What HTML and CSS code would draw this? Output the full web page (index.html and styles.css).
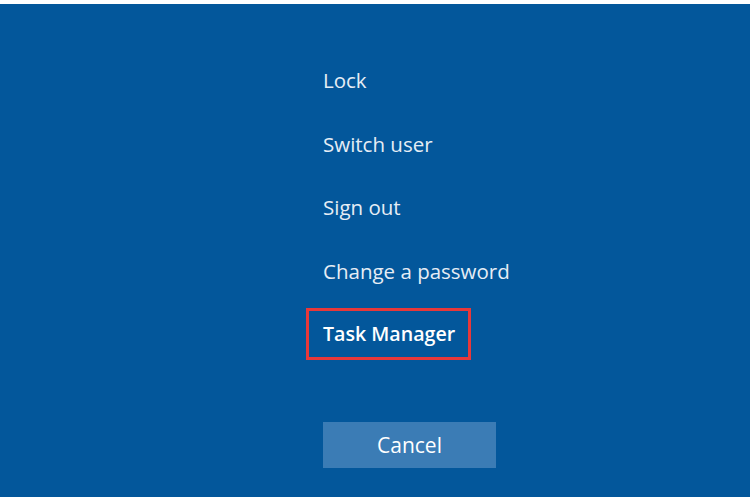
FILE: index.html
```html
<!DOCTYPE html>
<html lang="en">
<head>
  <meta charset="UTF-8" />
  <meta name="viewport" content="width=device-width, initial-scale=1.0" />
  <title>Security options</title>
  <link rel="stylesheet" href="styles.css">
</head>
<body>
  <div class="screen">
    <ul class="options">
      <li>Lock</li>
      <li>Switch user</li>
      <li>Sign out</li>
      <li>Change a password</li>
      <li class="selected">Task Manager</li>
    </ul>
    <button class="cancel">Cancel</button>
  </div>
</body>
</html>
```

FILE: styles.css
```css
body {
  margin: 0;
  background: #fff;
  font-family: "Open Sans", "Noto Sans", sans-serif;
}
.screen {
  margin-top: 4px;
  height: 493px;
  background: #03579b;
  padding-left: 323px;
  box-sizing: border-box;
  padding-top: 58px;
}
.options {
  list-style: none;
  margin: 0;
  padding: 0;
}
.options li {
  color: #e6edf5;
  font-size: 20.5px;
  height: 36px;
  line-height: 36px;
  margin-bottom: 27.5px;
  width: max-content;
}
.options li.selected {
  color: #fff;
  font-size: 19.6px;
  font-weight: 600;
  border: 3px solid #e8383a;
  padding: 5px 13px 5px 14px;
  margin-left: -17px;
  margin-top: -8px;
}
.cancel {
  display: block;
  margin-top: 62px;
  width: 173px;
  height: 46px;
  background: #3b7cb5;
  border: none;
  color: #fff;
  font-family: inherit;
  font-size: 21px;
}
```
